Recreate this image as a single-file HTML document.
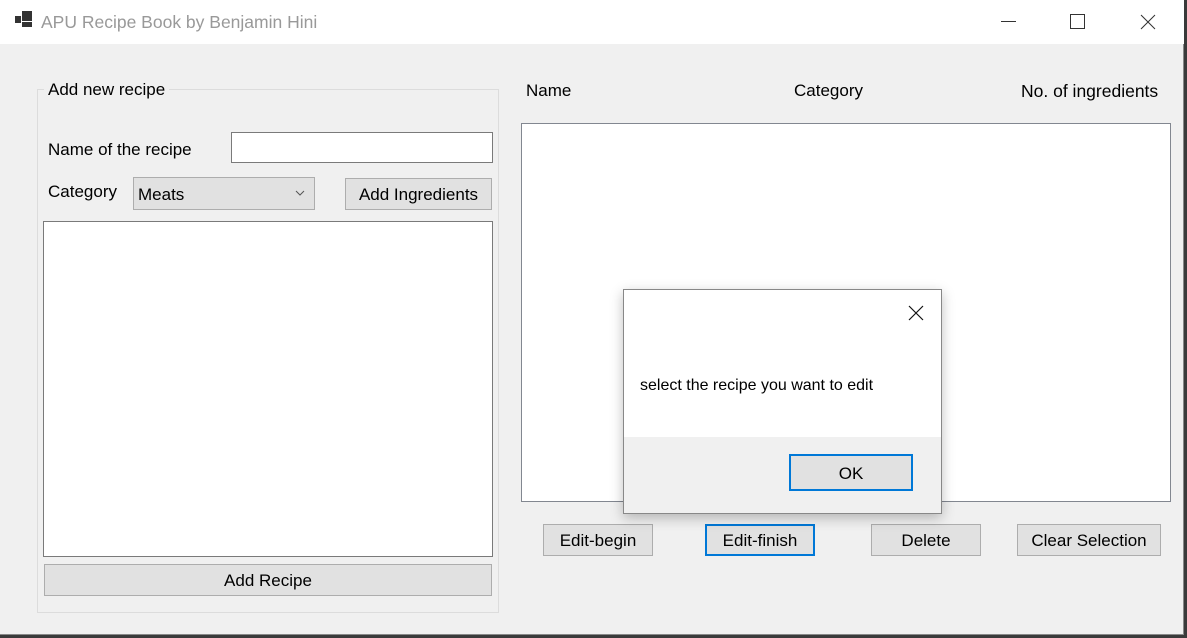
<!DOCTYPE html>
<html><head><style>
*{margin:0;padding:0;box-sizing:border-box}
body{width:1187px;height:638px;overflow:hidden;background:#3a3a3a;font-family:"Liberation Sans",sans-serif;font-size:16px;color:#000;position:relative}
.a{position:absolute}
.win{left:0;top:0;width:1184px;height:635px;background:#f0f0f0;border-right:1px solid #888;border-bottom:1px solid #888}
.title{left:0;top:0;width:1184px;height:44px;background:#fff}
.btn{position:absolute;background:#e1e1e1;border:1px solid #adadad;text-align:center;font-size:16px}
.box{position:absolute;background:#fff;border:1px solid #7a7a7a}
.t{position:absolute;white-space:nowrap}
</style></head><body>
<div class="a win"></div>
<div class="a title"></div>
<div class="a" style="left:15px;top:16px;width:6px;height:7px;background:#333"></div>
<div class="a" style="left:22px;top:11px;width:10px;height:10px;background:#333"></div>
<div class="a" style="left:22px;top:22px;width:10px;height:5px;background:#333"></div>
<div class="t" style="left:41px;top:12px;font-size:17.5px;color:#999">APU Recipe Book by Benjamin Hini</div>
<div class="a" style="left:1001px;top:21px;width:15px;height:1px;background:#333"></div>
<div class="a" style="left:1070px;top:14px;width:15px;height:15px;border:1px solid #333"></div>
<svg class="a" style="left:1140px;top:14px" width="16" height="16"><path d="M1 1L15 15M15 1L1 15" stroke="#333" stroke-width="1"/></svg>

<div class="a" style="left:37px;top:89px;width:462px;height:524px;border:1px solid #dcdcdc"></div>
<div class="t" style="left:44px;top:80px;background:#f0f0f0;padding:0 4px;font-size:17px">Add new recipe</div>
<div class="t" style="left:48px;top:140px;font-size:17px">Name of the recipe</div>
<div class="box" style="left:231px;top:132px;width:262px;height:31px"></div>
<div class="t" style="left:48px;top:182px;font-size:17px">Category</div>
<div class="btn" style="left:133px;top:177px;width:182px;height:33px;text-align:left;padding:7px 4px;font-size:17px">Meats</div>
<svg class="a" style="left:295px;top:190px" width="10" height="6"><path d="M1 1L5 5L9 1" stroke="#555" fill="none"/></svg>
<div class="btn" style="left:345px;top:178px;width:147px;height:32px;padding-top:6px;font-size:17px">Add Ingredients</div>
<div class="box" style="left:43px;top:221px;width:450px;height:336px"></div>
<div class="btn" style="left:44px;top:564px;width:448px;height:32px;padding-top:6px;font-size:17px">Add Recipe</div>

<div class="t" style="left:526px;top:81px;font-size:17px">Name</div>
<div class="t" style="left:794px;top:81px;font-size:17px">Category</div>
<div class="t" style="left:1021px;top:81px;font-size:17.5px">No. of ingredients</div>
<div class="box" style="left:521px;top:123px;width:650px;height:379px;border-color:#828790"></div>

<div class="btn" style="left:543px;top:524px;width:110px;height:32px;padding-top:6px;font-size:17px">Edit-begin</div>
<div class="btn" style="left:705px;top:524px;width:110px;height:32px;padding-top:5px;font-size:17px;border:2px solid #0078d7">Edit-finish</div>
<div class="btn" style="left:871px;top:524px;width:110px;height:32px;padding-top:6px;font-size:17px">Delete</div>
<div class="btn" style="left:1017px;top:524px;width:144px;height:32px;padding-top:6px;font-size:17px">Clear Selection</div>

<div class="a" style="left:623px;top:289px;width:319px;height:225px;background:#f0f0f0;border:1px solid #888;box-shadow:0 4px 12px rgba(0,0,0,.25)">
  <div class="a" style="left:0;top:0;width:317px;height:147px;background:#fff"></div>
  <svg class="a" style="left:284px;top:15px" width="16" height="16"><path d="M1 1L15 15M15 1L1 15" stroke="#111" stroke-width="1.2"/></svg>
  <div class="t" style="left:16px;top:87px;font-size:16px">select the recipe you want to edit</div>
  <div class="btn" style="left:165px;top:164px;width:124px;height:37px;border:2px solid #0078d7;padding-top:8px;font-size:17px">OK</div>
</div>
</body></html>
